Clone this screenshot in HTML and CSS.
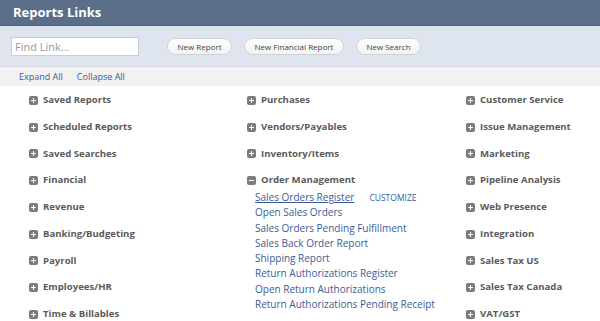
FILE: index.html
```html
<!DOCTYPE html>
<html lang="en">
<head>
  <meta charset="UTF-8" />
  <title>Reports Links</title>
  <link rel="stylesheet" href="styles.css">
</head>
<body>
  <div class="title-bar">Reports Links</div>

  <div class="tool-bar">
    <input class="find-link" type="text" placeholder="Find Link...">
    <div class="buttons">
      <button>New Report</button>
      <button>New Financial Report</button>
      <button>New Search</button>
    </div>
  </div>

  <div class="expand-bar">
    <a href="#">Expand All</a>
    <a href="#">Collapse All</a>
  </div>

  <div class="columns">
    <div class="column">
      <div class="section"><span class="box plus"></span>Saved Reports</div>
      <div class="section"><span class="box plus"></span>Scheduled Reports</div>
      <div class="section"><span class="box plus"></span>Saved Searches</div>
      <div class="section"><span class="box plus"></span>Financial</div>
      <div class="section"><span class="box plus"></span>Revenue</div>
      <div class="section"><span class="box plus"></span>Banking/Budgeting</div>
      <div class="section"><span class="box plus"></span>Payroll</div>
      <div class="section"><span class="box plus"></span>Employees/HR</div>
      <div class="section"><span class="box plus"></span>Time &amp; Billables</div>
    </div>

    <div class="column">
      <div class="section"><span class="box plus"></span>Purchases</div>
      <div class="section"><span class="box plus"></span>Vendors/Payables</div>
      <div class="section"><span class="box plus"></span>Inventory/Items</div>
      <div class="section"><span class="box minus"></span>Order Management</div>
      <ul class="links">
        <li><a href="#" class="current">Sales Orders Register</a><a href="#" class="customize">CUSTOMIZE</a></li>
        <li><a href="#">Open Sales Orders</a></li>
        <li><a href="#">Sales Orders Pending Fulfillment</a></li>
        <li><a href="#">Sales Back Order Report</a></li>
        <li><a href="#">Shipping Report</a></li>
        <li><a href="#">Return Authorizations Register</a></li>
        <li><a href="#">Open Return Authorizations</a></li>
        <li><a href="#">Return Authorizations Pending Receipt</a></li>
      </ul>
    </div>

    <div class="column">
      <div class="section"><span class="box plus"></span>Customer Service</div>
      <div class="section"><span class="box plus"></span>Issue Management</div>
      <div class="section"><span class="box plus"></span>Marketing</div>
      <div class="section"><span class="box plus"></span>Pipeline Analysis</div>
      <div class="section"><span class="box plus"></span>Web Presence</div>
      <div class="section"><span class="box plus"></span>Integration</div>
      <div class="section"><span class="box plus"></span>Sales Tax US</div>
      <div class="section"><span class="box plus"></span>Sales Tax Canada</div>
      <div class="section"><span class="box plus"></span>VAT/GST</div>
    </div>
  </div>
</body>
</html>
```

FILE: styles.css
```css
body {
  margin: 0;
  font-family: "Open Sans", Arial, sans-serif;
  background: #fff;
  overflow: hidden;
}
.title-bar {
  height: 26px;
  line-height: 25px;
  padding-left: 13px;
  background: #5a6e8a;
  border-bottom: 1px solid #4c5f7a;
  box-sizing: border-box;
  color: #fff;
  font-weight: bold;
  font-size: 13px;
}
.tool-bar {
  height: 41px;
  background: #dfe5ee;
  border-bottom: 1px solid #d2d7de;
  box-sizing: border-box;
  display: flex;
  align-items: center;
  padding-left: 11px;
}
.find-link {
  width: 128px;
  height: 19px;
  box-sizing: border-box;
  border: 1px solid #c9ced6;
  padding: 0 3px;
  font-family: inherit;
  font-size: 11px;
  margin: 0;
}
.find-link::placeholder {
  color: #9a9a9a;
}
.buttons {
  display: flex;
  gap: 12px;
  margin-left: 28px;
}
button {
  height: 17px;
  padding: 0 9.5px;
  border: 1px solid #cfd3d8;
  border-radius: 9px;
  background: linear-gradient(#ffffff, #f2f2f2);
  font-family: inherit;
  font-size: 8px;
  color: #444;
  line-height: 15px;
}
.expand-bar {
  height: 19px;
  line-height: 19px;
  background: #f2f2f2;
  padding-left: 19px;
  font-size: 9px;
  display: flex;
  gap: 14px;
}
.expand-bar a, .links a {
  color: #3b5c98;
  text-decoration: none;
}
.columns {
  display: grid;
  grid-template-columns: 218px 219px 130px;
  padding: 1px 0 0 29px;
}
.section {
  height: 26.75px;
  line-height: 26.75px;
  font-size: 9.6px;
  font-weight: bold;
  color: #5a5a5a;
  display: flex;
  align-items: center;
}
.box {
  width: 9px;
  height: 9px;
  border-radius: 2px;
  background: #7b7b7b;
  margin-right: 5px;
  position: relative;
  flex: none;
}
.box::before, .box::after {
  content: "";
  position: absolute;
  background: #fff;
}
.box::before {
  left: 2px;
  top: 4px;
  width: 5px;
  height: 1px;
}
.plus::after {
  left: 4px;
  top: 2px;
  width: 1px;
  height: 5px;
}
.links {
  list-style: none;
  margin: -4px 0 0 8px;
  padding: 0;
  font-size: 10px;
}
.links li {
  height: 15.25px;
  line-height: 15.25px;
}
.links a.current {
  text-decoration: underline;
}
.links a.customize {
  margin-left: 15px;
  font-size: 8.5px;
}
```
